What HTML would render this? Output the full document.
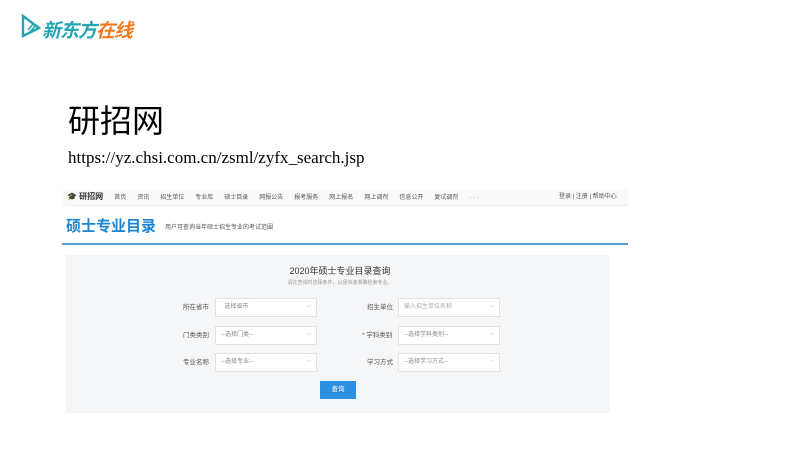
<!DOCTYPE html><html><head><meta charset="utf-8"><style>
*{margin:0;padding:0;box-sizing:border-box}
body{width:800px;height:450px;background:#fff;font-family:"Liberation Sans","Noto Sans CJK SC",sans-serif;position:relative;overflow:hidden}
.a{position:absolute;white-space:nowrap}
.sel{position:absolute;height:19px;background:#fff;border:1px solid #e2e2e2;font-size:6px;color:#888;line-height:17px;padding-left:5px}
.sel:after{content:"⌵";position:absolute;right:5px;top:-1px;color:#aaa;font-size:6px}
.lb{position:absolute;font-size:6.5px;color:#555;line-height:19px}
.nav span{margin-right:11px}
</style></head><body>
<svg class="a" style="left:21px;top:14px" width="20" height="24" viewBox="0 0 20 24"><path d="M2 2 L2 22 L18 14 Z" fill="none" stroke="#23a6b3" stroke-width="2.4"/><path d="M7 16 L13 9 M9 18 L15 11" stroke="#23a6b3" stroke-width="1.5"/></svg>
<div class="a" style="left:42px;top:16px;font-size:19px;font-weight:bold;font-style:italic;color:#23a6b3;letter-spacing:-1px">新东方<span style="color:#f07b1f">在线</span></div>
<div class="a" style="left:68px;top:96px;font-size:32px;color:#000">研招网</div>
<div class="a" style="left:68px;top:148px;font-size:17px;color:#000;font-family:'Liberation Serif',serif">https://yz.chsi.com.cn/zsml/zyfx_search.jsp</div>
<div class="a" style="left:62px;top:189px;width:566px;height:17px;background:#fafafa;border-bottom:1px solid #eee"></div>
<div class="a nav" style="left:67px;top:192px;font-size:6px;color:#555;line-height:10px"><span style="font-size:8px;color:#333;font-weight:bold">🎓 研招网</span><span>首页</span><span>资讯</span><span>招生单位</span><span>专业库</span><span>硕士目录</span><span>网报公告</span><span>报考服务</span><span>网上报名</span><span>网上调剂</span><span>信息公开</span><span>复试调剂</span><span>· · ·</span></div>
<div class="a" style="left:559px;top:192px;font-size:6px;color:#555;line-height:10px">登录 | 注册 | 帮助中心</div>
<div class="a" style="left:66px;top:215px;font-size:15px;font-weight:bold;color:#1c86d4">硕士专业目录</div>
<div class="a" style="left:165px;top:222px;font-size:6px;color:#555">用户可查询当年硕士招生专业的考试范围</div>
<div class="a" style="left:62px;top:243px;width:566px;height:2px;background:#5b9bd5"></div>
<div class="a" style="left:66px;top:255px;width:544px;height:158px;background:#f5f6f8"></div>
<div class="a" style="left:0;width:680px;top:264px;text-align:center;font-size:9px;color:#333">2020年硕士专业目录查询</div>
<div class="a" style="left:0;width:680px;top:279px;text-align:center;font-size:5px;color:#999">请在查询时选择条件，以便快速准确检索专业。</div>
<div class="lb" style="left:183px;top:298px">所在省市</div><div class="sel" style="left:215px;top:298px;width:102px">&nbsp;&nbsp;选择省市</div>
<div class="lb" style="left:367px;top:298px">招生单位</div><div class="sel" style="left:398px;top:298px;width:102px;color:#aaa">输入招生单位名称</div>
<div class="lb" style="left:183px;top:326px">门类类别</div><div class="sel" style="left:215px;top:326px;width:102px">--选择门类--</div>
<div class="lb" style="left:362px;top:326px">* 学科类别</div><div class="sel" style="left:398px;top:326px;width:102px">--选择学科类别--</div>
<div class="lb" style="left:183px;top:353px">专业名称</div><div class="sel" style="left:215px;top:353px;width:102px">--选择专业--</div>
<div class="lb" style="left:367px;top:353px">学习方式</div><div class="sel" style="left:398px;top:353px;width:102px">--选择学习方式--</div>
<div class="a" style="left:320px;top:381px;width:36px;height:18px;background:#2d8fe0;color:#fff;font-size:6.5px;text-align:center;line-height:18px">查询</div>
</body></html>
